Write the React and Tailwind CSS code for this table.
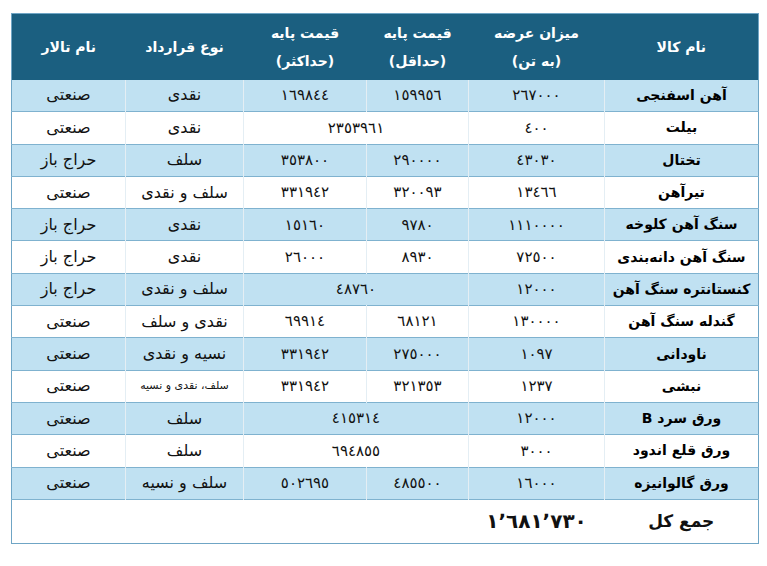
const rows = [
  { name: "آهن اسفنجی", offer: "٢٦٧٠٠٠", min: "١٥٩٩٥٦", max: "١٦٩٨٤٤", type: "نقدی", hall: "صنعتی" },
  { name: "بیلت", offer: "٤٠٠", merged: "٢٣٥٣٩٦١", type: "نقدی", hall: "صنعتی" },
  { name: "تختال", offer: "٤٣٠٣٠", min: "٢٩٠٠٠٠", max: "٣٥٣٨٠٠", type: "سلف", hall: "حراج باز" },
  { name: "تیرآهن", offer: "١٣٤٦٦", min: "٣٢٠٠٩٣", max: "٣٣١٩٤٢", type: "سلف و نقدی", hall: "صنعتی" },
  { name: "سنگ آهن کلوخه", offer: "١١١٠٠٠٠", min: "٩٧٨٠", max: "١٥١٦٠", type: "نقدی", hall: "حراج باز" },
  { name: "سنگ آهن دانه‌بندی", offer: "٧٢٥٠٠", min: "٨٩٣٠", max: "٢٦٠٠٠", type: "نقدی", hall: "حراج باز" },
  { name: "کنستانتره سنگ آهن", offer: "١٢٠٠٠", merged: "٤٨٧٦٠", type: "سلف و نقدی", hall: "حراج باز" },
  { name: "گندله سنگ آهن", offer: "١٣٠٠٠٠", min: "٦٨١٢١", max: "٦٩٩١٤", type: "نقدی و سلف", hall: "صنعتی" },
  { name: "ناودانی", offer: "١٠٩٧", min: "٢٧٥٠٠٠", max: "٣٣١٩٤٢", type: "نسیه و نقدی", hall: "صنعتی" },
  { name: "نبشی", offer: "١٢٣٧", min: "٣٢١٣٥٣", max: "٣٣١٩٤٢", type: "سلف، نقدی و نسیه", small: true, hall: "صنعتی" },
  { name: "ورق سرد B", offer: "١٢٠٠٠", merged: "٤١٥٣١٤", type: "سلف", hall: "صنعتی" },
  { name: "ورق قلع اندود", offer: "٣٠٠٠", merged: "٦٩٤٨٥٥", type: "سلف", hall: "صنعتی" },
  { name: "ورق گالوانیزه", offer: "١٦٠٠٠", min: "٤٨٥٥٠٠", max: "٥٠٢٦٩٥", type: "سلف و نسیه", hall: "صنعتی" },
];

const num = "text-center text-[15px] tracking-[2px] border-r border-[#e4eef4]";

export default function App() {
  return (
    <div className="bg-white w-[767px] h-[566px] pt-[13px] pl-[11px] font-['DejaVu_Sans',sans-serif]">
      <table dir="rtl" className="table-fixed border-collapse w-[747px] border border-[#6fa5c5] text-[#111]">
        <colgroup>
          <col className="w-[154px]" />
          <col className="w-[136px]" />
          <col className="w-[102px]" />
          <col className="w-[123px]" />
          <col className="w-[118px]" />
          <col className="w-[114px]" />
        </colgroup>
        <thead className="bg-[#1b5f80] text-white">
          <tr className="h-[66px] text-[14px] font-bold leading-[28px]">
            <th>نام کالا</th>
            <th>میزان عرضه<br />(به تن)</th>
            <th>قیمت پایه<br />(حداقل)</th>
            <th>قیمت پایه<br />(حداکثر)</th>
            <th>نوع قرارداد</th>
            <th>نام تالار</th>
          </tr>
        </thead>
        <tbody>
          {rows.map((r, i) => (
            <tr
              key={r.name}
              className={`h-[32.3px] border-b border-[#7fb2cf] ${i % 2 === 0 ? "bg-[#c0e1f2]" : "bg-white"}`}
            >
              <td className="text-center text-[14px] font-bold text-black px-1">{r.name}</td>
              <td className={num}>{r.offer}</td>
              {r.merged ? (
                <td colSpan={2} className={num}>{r.merged}</td>
              ) : (
                <>
                  <td className={num}>{r.min}</td>
                  <td className={num}>{r.max}</td>
                </>
              )}
              <td className={`text-center border-r border-[#e4eef4] ${r.small ? "text-[11px]" : "text-[16px]"}`}>{r.type}</td>
              <td className="text-center text-[16px] border-r border-[#e4eef4]">{r.hall}</td>
            </tr>
          ))}
          <tr className="h-[44px] bg-white">
            <td className="text-center text-[17px] font-bold">جمع کل</td>
            <td className="text-center text-[20px] font-bold tracking-[1px]">١٬٦٨١٬٧٣٠</td>
            <td colSpan={4}></td>
          </tr>
        </tbody>
      </table>
    </div>
  );
}
